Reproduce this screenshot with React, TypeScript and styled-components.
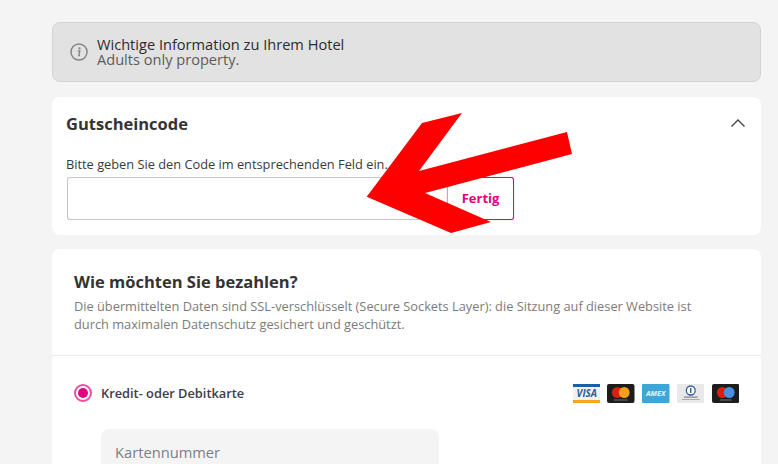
import React from 'react'
import styled, { createGlobalStyle } from 'styled-components'

const GlobalStyle = createGlobalStyle`
  html, body {
    margin: 0;
    padding: 0;
    height: 100%;
    overflow: hidden;
    background-color: #f4f4f4;
    font-family: 'Open Sans', 'Liberation Sans', sans-serif;
  }
`

const Page = styled.div`
  position: relative;
  width: 778px;
  height: 464px;
  overflow: hidden;
  box-sizing: border-box;
  padding: 22px 17px 0 52px;
`

const Notice = styled.div`
  height: 60px;
  box-sizing: border-box;
  display: flex;
  align-items: center;
  gap: 9px;
  padding: 0 17px;
  background-color: #e2e2e2;
  border: 1px solid #d2d2d2;
  border-radius: 8px;
  margin-bottom: 15px;
`

const NoticeText = styled.div`
  display: flex;
  flex-direction: column;
  font-size: 14.6px;
  line-height: 15px;
  color: #2c2c2c;
`

const NoticeSub = styled.span`
  color: #5c5c5c;
`

const Card = styled.section`
  background-color: #fff;
  border-radius: 8px;
`

const VoucherCard = styled(Card)`
  height: 138px;
  box-sizing: border-box;
  padding: 17px 15px 0 14px;
  margin-bottom: 14px;
`

const VoucherHead = styled.div`
  display: flex;
  align-items: center;
  justify-content: space-between;
  height: 22px;
`

const VoucherTitle = styled.h2`
  margin: -4px 0 0;
  font-size: 16.5px;
  font-weight: 700;
  color: #333;
`

const ChevronIcon = styled.svg`
  margin: -4px 0 0;
`

const Hint = styled.p`
  margin: 20px 0 4px;
  font-size: 12.8px;
  line-height: 17px;
  color: #3a3a3a;
`

const VoucherRow = styled.div`
  display: flex;
  padding-left: 1px;
`

const CodeInput = styled.input`
  width: 380px;
  height: 43px;
  box-sizing: border-box;
  border: 1px solid #c6c6c6;
  border-right: none;
  border-radius: 3px 0 0 3px;
  background: #fff;
  outline: none;
`

const DoneButton = styled.button`
  width: 67px;
  height: 43px;
  box-sizing: border-box;
  padding: 0 0 2px;
  border: 1px solid #e5007d;
  border-left-color: #f28cc3;
  border-radius: 0 3px 3px 0;
  box-shadow: 0 0 1px rgba(229, 0, 125, 0.6);
  background: #fff;
  color: #e5007d;
  font-family: inherit;
  font-size: 13px;
  font-weight: 700;
`

const PayCard = styled(Card)`
  height: 260px;
  border-radius: 8px 8px 0 0;
`

const PayHead = styled.div`
  height: 107px;
  box-sizing: border-box;
  padding: 21px 22px 0;
  border-bottom: 1px solid #ececec;
`

const PayTitle = styled.h2`
  margin: 0 0 3px;
  font-size: 16.5px;
  line-height: 24px;
  font-weight: 700;
  color: #333;
`

const PayNote = styled.p`
  margin: 0;
  font-size: 12.8px;
  line-height: 18px;
  color: #7b7b7b;
`

const MethodRow = styled.div`
  display: flex;
  align-items: center;
  height: 20px;
  margin-top: 27px;
  padding: 0 22px;
`

const Radio = styled.span`
  width: 18px;
  height: 18px;
  box-sizing: border-box;
  border: 2px solid #ee4da3;
  border-radius: 50%;
  display: flex;
  align-items: center;
  justify-content: center;
  margin-right: 9px;
  &::after {
    content: '';
    width: 10px;
    height: 10px;
    border-radius: 50%;
    background-color: #e5007d;
  }
`

const MethodLabel = styled.span`
  font-size: 12.8px;
  font-weight: 600;
  color: #3d3d4a;
`

const Brands = styled.div`
  margin-left: auto;
  display: flex;
  gap: 7.2px;
`

const FieldWrap = styled.div`
  padding: 26px 0 0 49px;
`

const Field = styled.div`
  width: 338px;
  height: 60px;
  box-sizing: border-box;
  padding: 13px 14px 0;
  background-color: #f4f4f4;
  border-radius: 8px 8px 0 0;
  font-size: 14.7px;
  line-height: 20px;
  color: #7b7f8a;
`

const Arrow = styled.svg`
  position: absolute;
  top: 0;
  left: 0;
  width: 778px;
  height: 464px;
  pointer-events: none;
`

const InfoIcon = () => (
  <svg width="18" height="18" viewBox="0 0 18 18" fill="none">
    <circle cx="9" cy="9" r="8" stroke="#858585" strokeWidth="1.5" />
    <circle cx="9.5" cy="5.4" r="1.1" fill="#858585" />
    <path d="M7.8 8h2l-1 4.6h1.2" stroke="#858585" strokeWidth="1.4" fill="none" />
  </svg>
)

const Chevron = () => (
  <ChevronIcon width="16" height="10" viewBox="0 0 16 10" fill="none">
    <path d="M1.5 8.5 8 2l6.5 6.5" stroke="#444" strokeWidth="1.4" />
  </ChevronIcon>
)

const CardIcon: React.FC<{ children: React.ReactNode }> = ({ children }) => (
  <svg width="27.5" height="19" viewBox="0 0 28 19" preserveAspectRatio="none">
    {children}
  </svg>
)

const App: React.FC = () => {
  return (
    <>
      <GlobalStyle />
      <Page>
        <Notice>
          <InfoIcon />
          <NoticeText>
            <span>Wichtige Information zu Ihrem Hotel</span>
            <NoticeSub>Adults only property.</NoticeSub>
          </NoticeText>
        </Notice>

        <VoucherCard>
          <VoucherHead>
            <VoucherTitle>Gutscheincode</VoucherTitle>
            <Chevron />
          </VoucherHead>
          <Hint>Bitte geben Sie den Code im entsprechenden Feld ein.</Hint>
          <VoucherRow>
            <CodeInput />
            <DoneButton>Fertig</DoneButton>
          </VoucherRow>
        </VoucherCard>

        <PayCard>
          <PayHead>
            <PayTitle>Wie möchten Sie bezahlen?</PayTitle>
            <PayNote>
              Die übermittelten Daten sind SSL-verschlüsselt (Secure Sockets Layer): die Sitzung auf dieser Website ist
              <br />
              durch maximalen Datenschutz gesichert und geschützt.
            </PayNote>
          </PayHead>

          <MethodRow>
            <Radio />
            <MethodLabel>Kredit- oder Debitkarte</MethodLabel>
            <Brands>
              <CardIcon>
                <rect width="28" height="19" rx="1" fill="#f1f1f1" />
                <rect width="28" height="3" fill="#1a5ea8" />
                <rect y="16" width="28" height="3" fill="#f2a91e" />
                <text x="14" y="13.2" textAnchor="middle" fontSize="10" fontWeight="700" fontStyle="italic" fontFamily="Open Sans" fill="#2a5d9c">VISA</text>
              </CardIcon>
              <CardIcon>
                <rect width="28" height="19" rx="2" fill="#1d1d1d" />
                <circle cx="10.5" cy="8.5" r="5.5" fill="#d8200f" />
                <circle cx="17.5" cy="8.5" r="5.5" fill="#f5a01a" />
                <rect x="7" y="15.5" width="14" height="1" fill="#777" />
              </CardIcon>
              <CardIcon>
                <rect width="28" height="19" rx="1" fill="#3fa5d6" />
                <text x="14" y="12" textAnchor="middle" fontSize="7.5" fontWeight="700" fontStyle="italic" fontFamily="Open Sans" fill="#e8f5fb">AMEX</text>
              </CardIcon>
              <CardIcon>
                <rect width="28" height="19" rx="1" fill="#e9e9e9" />
                <circle cx="14" cy="6.5" r="4.5" fill="#fff" stroke="#2b5c97" strokeWidth="1.3" />
                <rect x="13.3" y="4" width="1.4" height="5" fill="#2b5c97" />
                <rect x="7" y="12.5" width="14" height="1.3" fill="#8a8a8a" />
                <rect x="5" y="15" width="18" height="1" fill="#aaa" />
              </CardIcon>
              <CardIcon>
                <rect width="28" height="19" rx="2" fill="#1d1d1d" />
                <circle cx="10.5" cy="8.5" r="5.5" fill="#d8200f" />
                <circle cx="17.5" cy="8.5" r="5.5" fill="#4a90e2" />
                <rect x="8" y="15.5" width="12" height="1" fill="#777" />
              </CardIcon>
            </Brands>
          </MethodRow>

          <FieldWrap>
            <Field>Kartennummer</Field>
          </FieldWrap>
        </PayCard>

        <Arrow viewBox="0 0 778 464">
          <polygon
            fill="#ff0000"
            points="366.7,196.7 422,123 462,113 419,171 567,132 572,154 425,193 491,222 451,233"
          />
        </Arrow>
      </Page>
    </>
  )
}

export default App
